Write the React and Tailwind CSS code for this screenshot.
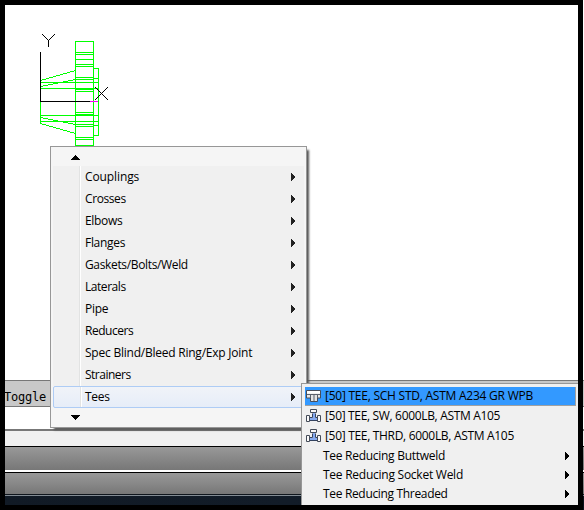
const items = [
  ["Couplings", "tracking-[-0.11px]"], ["Crosses", "tracking-[-0.4px]"], ["Elbows", "tracking-[-0.33px]"],
  ["Flanges", "tracking-[-0.3px]"], ["Gaskets/Bolts/Weld", "tracking-[-0.35px]"], ["Laterals", "tracking-[-0.45px]"],
  ["Pipe", "tracking-[-0.25px]"], ["Reducers", "tracking-[-0.48px]"], ["Spec Blind/Bleed Ring/Exp Joint", "tracking-[-0.23px]"],
  ["Strainers", "tracking-[-0.5px]"], ["Tees", "tracking-[-0.25px]"],
];

const subItems = [
  ["Tee Reducing Buttweld", "tracking-[-0.28px]"],
  ["Tee Reducing Socket Weld", "tracking-[-0.25px]"],
  ["Tee Reducing Threaded", "tracking-[-0.33px]"],
];

function Arrow({ className = "" }) {
  return (
    <svg className={className} width="4" height="8" viewBox="0 0 4 8" shapeRendering="crispEdges">
      <path d="M0 0h1v1h1v1h1v1h1v2h-1v1h-1v1h-1v1h-1z" fill="currentColor" />
    </svg>
  );
}

function ButtTee() {
  return (
    <svg className="shrink-0" width="16" height="14" viewBox="0 0 16 14">
      <path d="M.5 1.500h14v7.500h-3v3.500h-7V9h-4z" fill="#e4e4e4" stroke="#474d59" />
      <path d="M1 2h13v2.500H1z" fill="#fff" />
      <path d="M1 5.500h13M4.500 6v3M11.500 6v3M8 6v6" fill="none" stroke="#5b616c" />
    </svg>
  );
}

function SocketTee() {
  return (
    <svg className="shrink-0" width="16" height="16" viewBox="0 0 16 16">
      <path d="M4 9.500h2.500v-4M11.500 9.500H9.500v-4M4 12.500h8" fill="none" stroke="#34435f" />
      <path d="M7 5h2v5h2.500v2H4v-2h3z" fill="#86aaf0" />
      <path d="M4.500 1.500h6v3h-6zM.5 7.500h3v6h-3zM11.500 7.500h3v6h-3z" fill="#fafafa" stroke="#444b58" />
    </svg>
  );
}

function Drawing() {
  return (
    <svg width="90" height="117" viewBox="30 30 90 117" shapeRendering="crispEdges" fill="none">
      <g stroke="#00ff00">
        <path d="M75.500 147V41.500h18V147M75 52.500h19M75 54.500h19M75 59.500h19M75 64.500h19M75 66.500h19M75 77.500h19M75 79.500h19M75 89.500h19M75 91.500h19M75 112.500h19M75 114.500h19M75 124.500h19M75 126.500h19M75 137.500h19M75 139.500h19M75 145.500h19" />
        <path d="M94 68.500h4.500v67H94M94 78.500h5M94 125.500h5M40 82.500h59M40 88.500h59M40 115.500h59M40 121.500h59M40.500 102v22" />
        <path d="M40.500 80.500L75.500 70.500M40.500 86.500L75.500 79.500M40.500 117.500L75.500 124.500M40.500 123.500L75.500 133.500" />
      </g>
      <path d="M40.500 52v49.500H90M42 34l6.500 6.500L55 34M48.500 40v7M95 87l13 13M108 87L95 100" stroke="#000" />
      <path d="M90 101.500h8" stroke="#ff00ff" />
    </svg>
  );
}

export default function App() {
  return (
    <div className="relative h-[510px] w-[584px] overflow-hidden bg-white font-['Open_Sans','Noto_Sans',sans-serif] text-[12px] text-black">
      <div className="flex h-[510px] flex-col">
        <div className="h-[380px] bg-white pt-[30px] pl-[30px]"><Drawing /></div>
        <div className="h-[27px] border-y border-[#777] bg-[#c8c8c8] pt-[8px] pl-[4px] font-['DejaVu_Sans_Mono',monospace] text-[12px] leading-[16px] tracking-[-0.2px]">Toggle</div>
        <div className="h-[22px]" />
        <div className="h-[17px] border-t-2 border-[#777] bg-[#f0f0f0]" />
        <div className="h-[24px] border-t border-black bg-linear-to-b from-[#999] to-[#777]" />
        <div className="h-[2px] bg-white" />
        <div className="h-[22px] border-t border-black bg-linear-to-b from-[#999] to-[#777]" />
        <div className="h-px bg-[#10161d]" />
        <div className="h-[15px] border-t border-[#828b93] bg-linear-to-r from-[#111a25] via-[#121c28] to-[#0b121c]" />
      </div>

      <div className="absolute top-[146px] left-[50px] flex h-[282px] w-[257px] flex-col border border-[#979797] bg-[#f5f5f5] p-[2px] shadow-[3px_3px_2px_-1px_#555]">
        <div className="flex h-[17px] items-center pl-[18px]">
          <svg width="9" height="5" viewBox="0 0 9 5" shapeRendering="crispEdges"><path d="M4 0h1v1h1v1h1v1h1v1h1v1H0V4h1V3h1V2h1V1h1z" /></svg>
        </div>
        {items.map(([label, tracking], i) => (
          <div key={label} className={`relative flex h-[22px] shrink-0 items-center justify-between ${i === 10 ? "rounded-[2px] border border-[#aeccf5] bg-linear-to-b from-[#f0f3f8] to-[#e6edf8] pl-[31px] pr-[8px]" : "bg-[#f0f0f0] pl-[32px] pr-[9px]"}`}>
            <span className="absolute top-0 left-[26px] h-full border-l border-[#e2e3e3] border-r border-r-white" />
            <span className={`whitespace-nowrap ${tracking}`}>{label}</span>
            <Arrow className="text-[#222]" />
          </div>
        ))}
        <div className="flex h-[17px] items-center pt-[2px] pl-[18px]">
          <svg width="9" height="5" viewBox="0 0 9 5" shapeRendering="crispEdges"><path d="M0 0h9v1H8v1H7v1H6v1H5v1H4V4H3V3H2V2H1V1H0z" /></svg>
        </div>
      </div>

      <div className="absolute top-[383px] left-[301px] h-[127px] w-[277px] border-t border-l border-[#979797] bg-[#f0f0f0] pt-[3px] pl-[3px]">
        <div className="flex h-[19px] w-[271px] items-center border-r border-b border-[#a0a0a0] bg-[#3399ff] pl-px"><ButtTee /><span className="pl-[3px] tracking-[-0.24px] whitespace-nowrap">[50] TEE, SCH STD, ASTM A234 GR WPB</span></div>
        <div className="flex h-[20px] items-center pl-px"><SocketTee /><span className="pl-[3px] tracking-[-0.33px] whitespace-nowrap">[50] TEE, SW, 6000LB, ASTM A105</span></div>
        <div className="flex h-[20px] items-center pl-px"><SocketTee /><span className="pl-[3px] tracking-[-0.31px] whitespace-nowrap">[50] TEE, THRD, 6000LB, ASTM A105</span></div>
        {subItems.map(([label, tracking]) => (
          <div key={label} className="flex h-[19px] items-center justify-between pr-[9px] pl-[18px]"><span className={`whitespace-nowrap ${tracking}`}>{label}</span><Arrow /></div>
        ))}
      </div>
      <div className="absolute inset-y-0 left-0 w-[583px] border-[5px] border-black" />
    </div>
  );
}
